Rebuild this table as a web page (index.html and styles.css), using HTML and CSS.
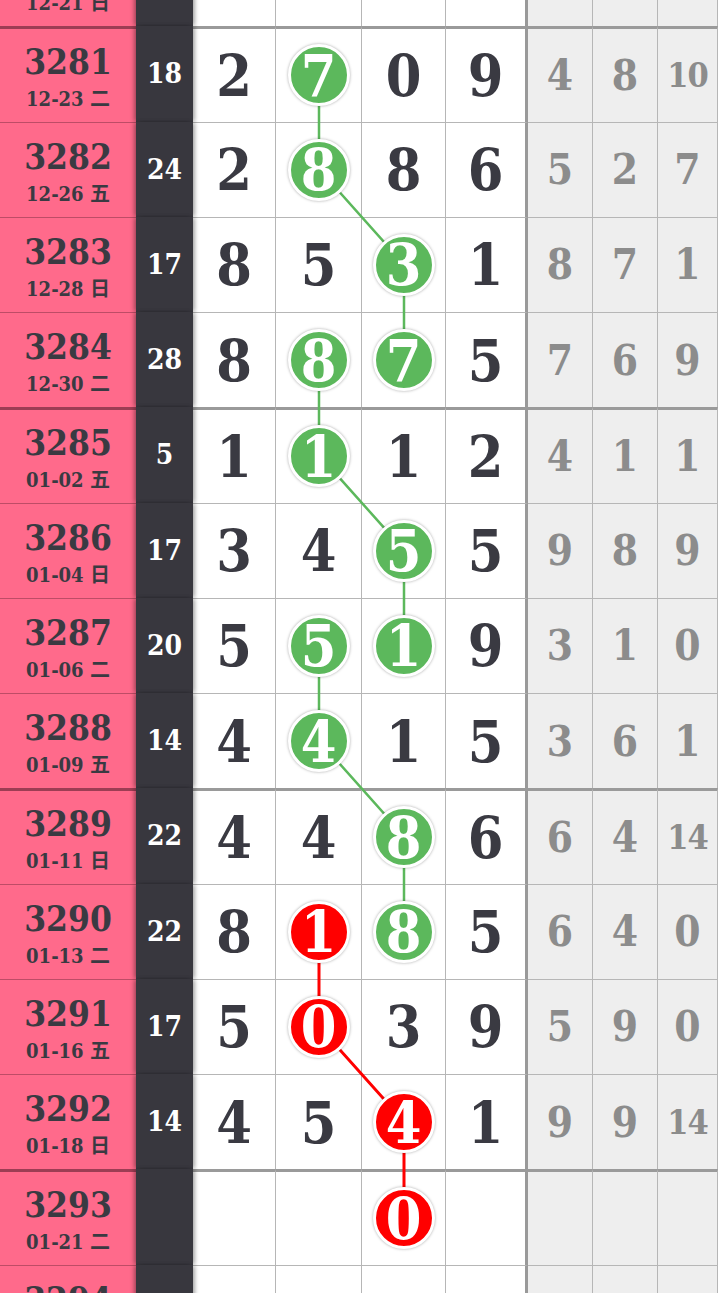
FILE: index.html
```html
<!DOCTYPE html>
<html lang="zh">
<head>
  <meta charset="UTF-8" />
  <meta name="viewport" content="width=device-width, initial-scale=1.0"/>
  <title>走势图</title>
  <link rel="stylesheet" href="styles.css">
</head>
<body>

  <div class="board">

    <div class="row">
      <div class="cell issue"><b>3280</b><i>12-21 日</i></div>
      <div class="cell sum"></div>
      <div class="cell n"></div><div class="cell n"></div><div class="cell n"></div><div class="cell n last"></div>
      <div class="cell m"></div><div class="cell m"></div><div class="cell m"></div>
    </div>

    <div class="row grp">
      <div class="cell issue"><b>3281</b><i>12-23 二</i></div>
      <div class="cell sum">18</div>
      <div class="cell n">2</div><div class="cell n"><span class="ball g">7</span></div><div class="cell n">0</div><div class="cell n last">9</div>
      <div class="cell m">4</div><div class="cell m">8</div><div class="cell m sm">10</div>
    </div>

    <div class="row">
      <div class="cell issue"><b>3282</b><i>12-26 五</i></div>
      <div class="cell sum">24</div>
      <div class="cell n">2</div><div class="cell n"><span class="ball g">8</span></div><div class="cell n">8</div><div class="cell n last">6</div>
      <div class="cell m">5</div><div class="cell m">2</div><div class="cell m">7</div>
    </div>

    <div class="row">
      <div class="cell issue"><b>3283</b><i>12-28 日</i></div>
      <div class="cell sum">17</div>
      <div class="cell n">8</div><div class="cell n">5</div><div class="cell n"><span class="ball g">3</span></div><div class="cell n last">1</div>
      <div class="cell m">8</div><div class="cell m">7</div><div class="cell m">1</div>
    </div>

    <div class="row">
      <div class="cell issue"><b>3284</b><i>12-30 二</i></div>
      <div class="cell sum">28</div>
      <div class="cell n">8</div><div class="cell n"><span class="ball g">8</span></div><div class="cell n"><span class="ball g">7</span></div><div class="cell n last">5</div>
      <div class="cell m">7</div><div class="cell m">6</div><div class="cell m">9</div>
    </div>

    <div class="row grp">
      <div class="cell issue"><b>3285</b><i>01-02 五</i></div>
      <div class="cell sum">5</div>
      <div class="cell n">1</div><div class="cell n"><span class="ball g">1</span></div><div class="cell n">1</div><div class="cell n last">2</div>
      <div class="cell m">4</div><div class="cell m">1</div><div class="cell m">1</div>
    </div>

    <div class="row">
      <div class="cell issue"><b>3286</b><i>01-04 日</i></div>
      <div class="cell sum">17</div>
      <div class="cell n">3</div><div class="cell n">4</div><div class="cell n"><span class="ball g">5</span></div><div class="cell n last">5</div>
      <div class="cell m">9</div><div class="cell m">8</div><div class="cell m">9</div>
    </div>

    <div class="row">
      <div class="cell issue"><b>3287</b><i>01-06 二</i></div>
      <div class="cell sum">20</div>
      <div class="cell n">5</div><div class="cell n"><span class="ball g">5</span></div><div class="cell n"><span class="ball g">1</span></div><div class="cell n last">9</div>
      <div class="cell m">3</div><div class="cell m">1</div><div class="cell m">0</div>
    </div>

    <div class="row">
      <div class="cell issue"><b>3288</b><i>01-09 五</i></div>
      <div class="cell sum">14</div>
      <div class="cell n">4</div><div class="cell n"><span class="ball g">4</span></div><div class="cell n">1</div><div class="cell n last">5</div>
      <div class="cell m">3</div><div class="cell m">6</div><div class="cell m">1</div>
    </div>

    <div class="row grp">
      <div class="cell issue"><b>3289</b><i>01-11 日</i></div>
      <div class="cell sum">22</div>
      <div class="cell n">4</div><div class="cell n">4</div><div class="cell n"><span class="ball g">8</span></div><div class="cell n last">6</div>
      <div class="cell m">6</div><div class="cell m">4</div><div class="cell m sm">14</div>
    </div>

    <div class="row">
      <div class="cell issue"><b>3290</b><i>01-13 二</i></div>
      <div class="cell sum">22</div>
      <div class="cell n">8</div><div class="cell n"><span class="ball r">1</span></div><div class="cell n"><span class="ball g">8</span></div><div class="cell n last">5</div>
      <div class="cell m">6</div><div class="cell m">4</div><div class="cell m">0</div>
    </div>

    <div class="row">
      <div class="cell issue"><b>3291</b><i>01-16 五</i></div>
      <div class="cell sum">17</div>
      <div class="cell n">5</div><div class="cell n"><span class="ball r">0</span></div><div class="cell n">3</div><div class="cell n last">9</div>
      <div class="cell m">5</div><div class="cell m">9</div><div class="cell m">0</div>
    </div>

    <div class="row">
      <div class="cell issue"><b>3292</b><i>01-18 日</i></div>
      <div class="cell sum">14</div>
      <div class="cell n">4</div><div class="cell n">5</div><div class="cell n"><span class="ball r">4</span></div><div class="cell n last">1</div>
      <div class="cell m">9</div><div class="cell m">9</div><div class="cell m sm">14</div>
    </div>

    <div class="row grp">
      <div class="cell issue"><b>3293</b><i>01-21 二</i></div>
      <div class="cell sum"></div>
      <div class="cell n"></div><div class="cell n"></div><div class="cell n"><span class="ball r">0</span></div><div class="cell n last"></div>
      <div class="cell m"></div><div class="cell m"></div><div class="cell m"></div>
    </div>

    <div class="row">
      <div class="cell issue"><b>3294</b><i>01-23 五</i></div>
      <div class="cell sum"></div>
      <div class="cell n"></div><div class="cell n"></div><div class="cell n"></div><div class="cell n last"></div>
      <div class="cell m"></div><div class="cell m"></div><div class="cell m"></div>
    </div>

    <!-- trend lines between the balls -->
    <svg class="lines" width="718" height="1430" viewBox="0 0 718 1430">
      <path class="green" d="M319 142.9 L319 238.1 L404 333.4 L404 428.6
                            M319 428.6 L319 523.9 L404 619.1 L404 714.4
                            M319 714.4 L319 809.6 L404 904.9 L404 1000.1"/>
      <path class="red" d="M319 1000.1 L319 1095.4 L404 1190.6 L404 1285.9"/>
    </svg>

  </div>

</body>
</html>
```

FILE: styles.css
```css
body {
  margin: 0;
  overflow: hidden;
  background-color: #fff;
  font-family: "DejaVu Serif Condensed", "DejaVu Serif", "Noto Sans CJK SC", serif;
  font-weight: bold;
}
.board {
  position: relative;
  margin-top: -69px;
}
.row {
  display: grid;
  grid-template-columns: 136px 57px 83px 86px 84px 82px 65px 65px 60px;
  height: 95.25px;
}
.cell {
  box-sizing: border-box;
  display: flex;
  align-items: center;
  justify-content: center;
  border-top: 1px solid #b6b6b6;
  border-right: 1px solid #b6b6b6;
  color: #3a3a42;
}
.grp .cell {
  border-top: 3px solid #9a9a9a;
}
.issue {
  flex-direction: column;
  background-color: #ff6a8b;
  border-top-color: rgba(70, 20, 35, 0.35);
  border-right: none;
  padding-top: 2px;
}
.grp .issue {
  border-top-color: rgba(60, 15, 30, 0.5);
}
.issue b {
  font-size: 35px;
  line-height: 46px;
}
.issue i {
  font-style: normal;
  font-size: 20px;
  line-height: 28px;
}
.sum {
  position: relative;
  z-index: 1;
  background-color: #38373e;
  border: none;
  color: #fff;
  font-size: 28px;
  box-shadow: 3px 0 4px -1px rgba(0, 0, 0, 0.35), -3px 0 4px -1px rgba(0, 0, 0, 0.35);
}
.grp .sum {
  border-top: none;
}
.n {
  font-size: 57px;
}
.n.last {
  border-right: 3px solid #999;
}
.m {
  background-color: #eeeeee;
  color: #8c8c8c;
  font-size: 42px;
}
.m.sm {
  font-size: 34px;
  letter-spacing: -1px;
}
.ball {
  position: relative;
  z-index: 3;
  display: flex;
  align-items: center;
  justify-content: center;
  width: 56px;
  height: 56px;
  border: 3px solid #fff;
  border-radius: 50%;
  color: #fff;
  line-height: 1;
  box-shadow: 0 0 3px rgba(0, 0, 0, 0.35);
}
.ball.g {
  background-color: #5cb85c;
}
.ball.r {
  background-color: #ff0000;
}
.lines {
  position: absolute;
  top: 0;
  left: 0;
  z-index: 2;
  pointer-events: none;
}
.lines path {
  fill: none;
}
.lines .green {
  stroke: #5cb85c;
  stroke-width: 2.5;
}
.lines .red {
  stroke: #ff0000;
  stroke-width: 3;
}
```
